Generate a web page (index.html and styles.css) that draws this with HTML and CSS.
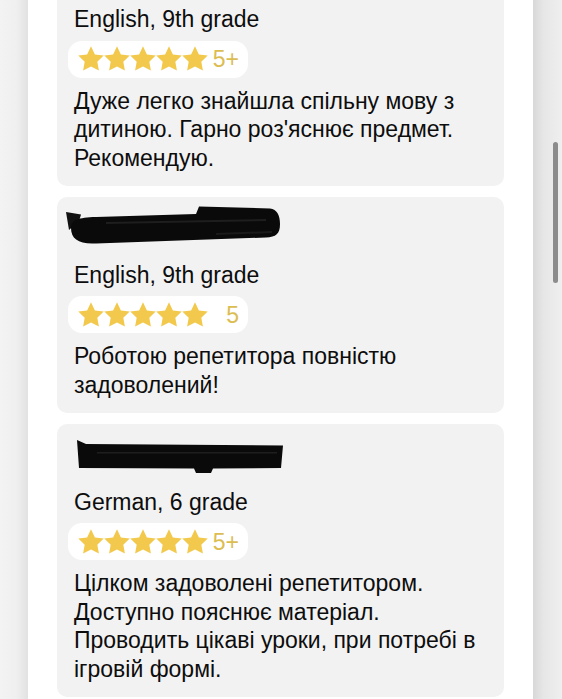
FILE: index.html
```html
<!DOCTYPE html>
<html lang="uk">
<head>
<meta charset="utf-8">
<title>Відгуки</title>
<link rel="stylesheet" href="styles.css">
</head>
<body>
<div class="page">
  <div class="gutter gutter-left"></div>
  <main class="panel">
    <div class="reviews">
      <article class="card">
        <div class="name"></div>
        <div class="subject">English, 9th grade</div>
        <div class="rating">
          <span class="stars">
            <svg class="star" viewBox="1.3 0.9 21.4 21.4"><path d="M12 1.2l3.2 6.6 7.3 1-5.3 5.1 1.3 7.2L12 17.7l-6.5 3.4 1.3-7.2L1.5 8.8l7.3-1z"/></svg><svg class="star" viewBox="1.3 0.9 21.4 21.4"><path d="M12 1.2l3.2 6.6 7.3 1-5.3 5.1 1.3 7.2L12 17.7l-6.5 3.4 1.3-7.2L1.5 8.8l7.3-1z"/></svg><svg class="star" viewBox="1.3 0.9 21.4 21.4"><path d="M12 1.2l3.2 6.6 7.3 1-5.3 5.1 1.3 7.2L12 17.7l-6.5 3.4 1.3-7.2L1.5 8.8l7.3-1z"/></svg><svg class="star" viewBox="1.3 0.9 21.4 21.4"><path d="M12 1.2l3.2 6.6 7.3 1-5.3 5.1 1.3 7.2L12 17.7l-6.5 3.4 1.3-7.2L1.5 8.8l7.3-1z"/></svg><svg class="star" viewBox="1.3 0.9 21.4 21.4"><path d="M12 1.2l3.2 6.6 7.3 1-5.3 5.1 1.3 7.2L12 17.7l-6.5 3.4 1.3-7.2L1.5 8.8l7.3-1z"/></svg>
          </span>
          <span class="score">5+</span>
        </div>
        <p class="text">Дуже легко знайшла спільну мову з<br>дитиною. Гарно роз'яснює предмет.<br>Рекомендую.</p>
      </article>

      <article class="card">
        <div class="name">
          <svg class="mark mark-a" width="216" height="40" viewBox="0 0 216 40">
            <path d="M0 7 L15 9.5 L13 16 L3 25 Z" fill="#111"/>
            <path d="M5 23 C5 15 12 12.5 30 12 L130 9 L133 1.5 L204 3.5 C211 4.5 214 10 214 19 C214 29 210 32 200 32.5 L30 38.5 C13 39.5 5 34 5 23 Z" fill="#0a0a0a"/>
            <path d="M40 17 L200 14 L200 16 L40 19 Z" fill="#1e1e1e"/>
            <path d="M150 28 L206 26 L206 28 L150 30 Z" fill="#1a1a1a"/>
          </svg>
        </div>
        <div class="subject">English, 9th grade</div>
        <div class="rating">
          <span class="stars">
            <svg class="star" viewBox="1.3 0.9 21.4 21.4"><path d="M12 1.2l3.2 6.6 7.3 1-5.3 5.1 1.3 7.2L12 17.7l-6.5 3.4 1.3-7.2L1.5 8.8l7.3-1z"/></svg><svg class="star" viewBox="1.3 0.9 21.4 21.4"><path d="M12 1.2l3.2 6.6 7.3 1-5.3 5.1 1.3 7.2L12 17.7l-6.5 3.4 1.3-7.2L1.5 8.8l7.3-1z"/></svg><svg class="star" viewBox="1.3 0.9 21.4 21.4"><path d="M12 1.2l3.2 6.6 7.3 1-5.3 5.1 1.3 7.2L12 17.7l-6.5 3.4 1.3-7.2L1.5 8.8l7.3-1z"/></svg><svg class="star" viewBox="1.3 0.9 21.4 21.4"><path d="M12 1.2l3.2 6.6 7.3 1-5.3 5.1 1.3 7.2L12 17.7l-6.5 3.4 1.3-7.2L1.5 8.8l7.3-1z"/></svg><svg class="star" viewBox="1.3 0.9 21.4 21.4"><path d="M12 1.2l3.2 6.6 7.3 1-5.3 5.1 1.3 7.2L12 17.7l-6.5 3.4 1.3-7.2L1.5 8.8l7.3-1z"/></svg>
          </span>
          <span class="score">5</span>
        </div>
        <p class="text">Роботою репетитора повністю<br>задоволений!</p>
      </article>

      <article class="card">
        <div class="name">
          <svg class="mark mark-b" width="208" height="34" viewBox="0 0 208 34">
            <path d="M0 0 L9 4 L206 5.5 L204 28 L136 28.5 L134 33 L119 33 L117 28.5 L2 28 Z" fill="#0a0a0a"/>
            <path d="M20 12 L200 12 L200 13.5 L20 13.5 Z" fill="#1e1e1e"/>
          </svg>
        </div>
        <div class="subject">German, 6 grade</div>
        <div class="rating">
          <span class="stars">
            <svg class="star" viewBox="1.3 0.9 21.4 21.4"><path d="M12 1.2l3.2 6.6 7.3 1-5.3 5.1 1.3 7.2L12 17.7l-6.5 3.4 1.3-7.2L1.5 8.8l7.3-1z"/></svg><svg class="star" viewBox="1.3 0.9 21.4 21.4"><path d="M12 1.2l3.2 6.6 7.3 1-5.3 5.1 1.3 7.2L12 17.7l-6.5 3.4 1.3-7.2L1.5 8.8l7.3-1z"/></svg><svg class="star" viewBox="1.3 0.9 21.4 21.4"><path d="M12 1.2l3.2 6.6 7.3 1-5.3 5.1 1.3 7.2L12 17.7l-6.5 3.4 1.3-7.2L1.5 8.8l7.3-1z"/></svg><svg class="star" viewBox="1.3 0.9 21.4 21.4"><path d="M12 1.2l3.2 6.6 7.3 1-5.3 5.1 1.3 7.2L12 17.7l-6.5 3.4 1.3-7.2L1.5 8.8l7.3-1z"/></svg><svg class="star" viewBox="1.3 0.9 21.4 21.4"><path d="M12 1.2l3.2 6.6 7.3 1-5.3 5.1 1.3 7.2L12 17.7l-6.5 3.4 1.3-7.2L1.5 8.8l7.3-1z"/></svg>
          </span>
          <span class="score">5+</span>
        </div>
        <p class="text">Цілком задоволені репетитором.<br>Доступно пояснює матеріал.<br>Проводить цікаві уроки, при потребі в<br>ігровій формі.</p>
      </article>
    </div>
  </main>
  <div class="gutter gutter-right">
    <div class="thumb"></div>
  </div>
</div>
</body>
</html>
```

FILE: styles.css
```css
* { box-sizing: border-box; }

html, body {
  margin: 0;
  padding: 0;
  height: 100%;
  overflow: hidden;
  background: #f2f2f2;
}

body {
  font-family: "Liberation Sans", Arial, sans-serif;
  color: #0d0d0d;
}

.page {
  display: flex;
  height: 699px;
}

.gutter {
  flex: none;
  height: 100%;
}

.gutter-left {
  width: 28px;
  background: linear-gradient(to right, #f3f3f3 0%, #efefef 60%, #e2e2e2 100%);
}

.gutter-right {
  width: 29px;
  position: relative;
  background: linear-gradient(to right, #d8d8d8 0%, #e6e6e6 35%, #efefef 100%);
}

.thumb {
  position: absolute;
  left: 20px;
  top: 142px;
  width: 5px;
  height: 141px;
  border-radius: 3px;
  background: #8c8c8c;
}

.panel {
  flex: 1;
  background: #fff;
  overflow: hidden;
  padding-left: 29px;
}

.reviews {
  width: 447px;
  margin-top: -59px;
  display: flex;
  flex-direction: column;
  gap: 10.5px;
}

.card {
  background: #f2f2f2;
  border-radius: 10px;
  padding: 8px 6px 14px 17px;
}

.name {
  height: 56px;
  display: flex;
  align-items: flex-start;
}

.mark { display: block; flex: none; }
.mark-a { margin: 0 0 0 -8px; }
.mark-b { margin: 8px 0 0 3px; }

.subject {
  font-size: 23px;
  line-height: 28.5px;
  white-space: nowrap;
}

.rating {
  margin: 7px 0 0 -6px;
  height: 37px;
  width: 180px;
  display: flex;
  align-items: center;
  padding: 0 9px 0 10px;
  background: #fff;
  border-radius: 14px;
}

.stars {
  display: flex;
  width: 130px;
}

.star {
  width: 26px;
  height: 26px;
  fill: #f2c94c;
  display: block;
}

.score {
  flex: 1;
  text-align: right;
  font-size: 23px;
  line-height: 26px;
  color: #dcbd52;
}

.text {
  margin: 9px 0 0;
  font-size: 23px;
  line-height: 28.5px;
  white-space: nowrap;
}
```
